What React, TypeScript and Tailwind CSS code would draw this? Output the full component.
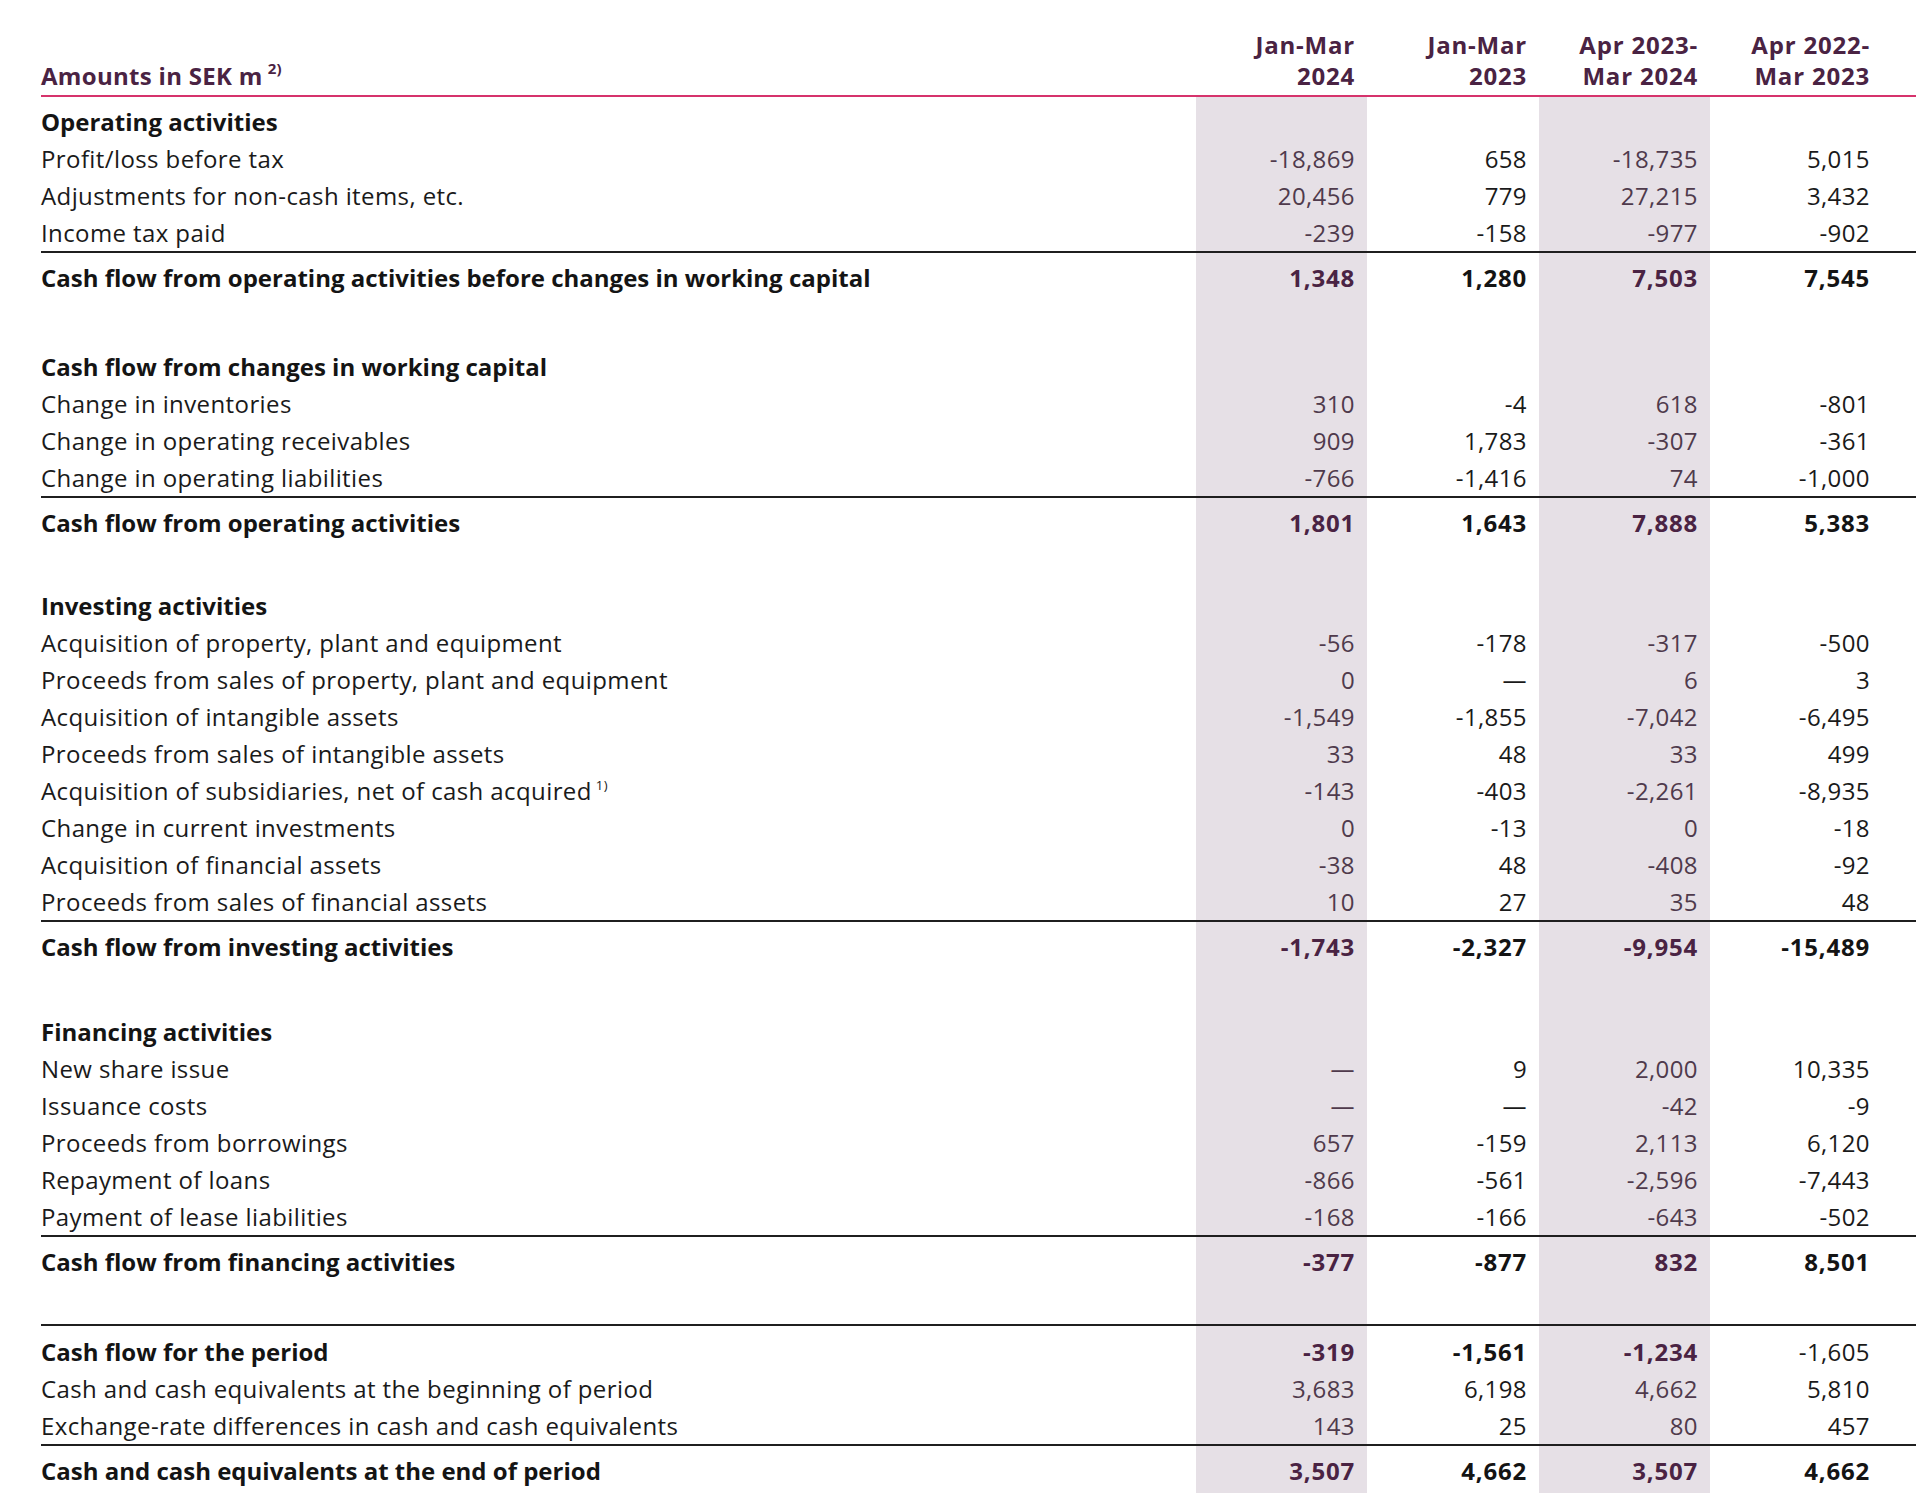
import React from "react";

type RowKind = "head" | "item" | "total" | "period";

type Row = {
  kind: RowKind;
  label: string;
  sup?: string;
  values?: string[];
  bold?: boolean[];
};

const GRID = "grid grid-cols-[1155px_171px_172px_171px_172px]";
const SHADE = "bg-[#e6e0e6]";

const sections: { rows: Row[]; after: string }[] = [
  {
    after: "h-[48px]",
    rows: [
      { kind: "head", label: "Operating activities" },
      { kind: "item", label: "Profit/loss before tax", values: ["-18,869", "658", "-18,735", "5,015"] },
      { kind: "item", label: "Adjustments for non-cash items, etc.", values: ["20,456", "779", "27,215", "3,432"] },
      { kind: "item", label: "Income tax paid", values: ["-239", "-158", "-977", "-902"] },
      {
        kind: "total",
        label: "Cash flow from operating activities before changes in working capital",
        values: ["1,348", "1,280", "7,503", "7,545"],
      },
    ],
  },
  {
    after: "h-[42px]",
    rows: [
      { kind: "head", label: "Cash flow from changes in working capital" },
      { kind: "item", label: "Change in inventories", values: ["310", "-4", "618", "-801"] },
      { kind: "item", label: "Change in operating receivables", values: ["909", "1,783", "-307", "-361"] },
      { kind: "item", label: "Change in operating liabilities", values: ["-766", "-1,416", "74", "-1,000"] },
      { kind: "total", label: "Cash flow from operating activities", values: ["1,801", "1,643", "7,888", "5,383"] },
    ],
  },
  {
    after: "h-[44px]",
    rows: [
      { kind: "head", label: "Investing activities" },
      { kind: "item", label: "Acquisition of property, plant and equipment", values: ["-56", "-178", "-317", "-500"] },
      { kind: "item", label: "Proceeds from sales of property, plant and equipment", values: ["0", "—", "6", "3"] },
      { kind: "item", label: "Acquisition of intangible assets", values: ["-1,549", "-1,855", "-7,042", "-6,495"] },
      { kind: "item", label: "Proceeds from sales of intangible assets", values: ["33", "48", "33", "499"] },
      {
        kind: "item",
        label: "Acquisition of subsidiaries, net of cash acquired",
        sup: "1)",
        values: ["-143", "-403", "-2,261", "-8,935"],
      },
      { kind: "item", label: "Change in current investments", values: ["0", "-13", "0", "-18"] },
      { kind: "item", label: "Acquisition of financial assets", values: ["-38", "48", "-408", "-92"] },
      { kind: "item", label: "Proceeds from sales of financial assets", values: ["10", "27", "35", "48"] },
      { kind: "total", label: "Cash flow from investing activities", values: ["-1,743", "-2,327", "-9,954", "-15,489"] },
    ],
  },
  {
    after: "h-[40px]",
    rows: [
      { kind: "head", label: "Financing activities" },
      { kind: "item", label: "New share issue", values: ["—", "9", "2,000", "10,335"] },
      { kind: "item", label: "Issuance costs", values: ["—", "—", "-42", "-9"] },
      { kind: "item", label: "Proceeds from borrowings", values: ["657", "-159", "2,113", "6,120"] },
      { kind: "item", label: "Repayment of loans", values: ["-866", "-561", "-2,596", "-7,443"] },
      { kind: "item", label: "Payment of lease liabilities", values: ["-168", "-166", "-643", "-502"] },
      { kind: "total", label: "Cash flow from financing activities", values: ["-377", "-877", "832", "8,501"] },
    ],
  },
];

const closing: Row[] = [
  {
    kind: "period",
    label: "Cash flow for the period",
    values: ["-319", "-1,561", "-1,234", "-1,605"],
    bold: [true, true, true, false],
  },
  { kind: "item", label: "Cash and cash equivalents at the beginning of period", values: ["3,683", "6,198", "4,662", "5,810"] },
  { kind: "item", label: "Exchange-rate differences in cash and cash equivalents", values: ["143", "25", "80", "457"] },
  { kind: "total", label: "Cash and cash equivalents at the end of period", values: ["3,507", "4,662", "3,507", "4,662"] },
];

// empty band that keeps the shaded columns running
const Gap = ({ className }: { className: string }) => (
  <div className={`${GRID} ${className}`}>
    <div />
    <div className={SHADE} />
    <div />
    <div className={SHADE} />
    <div />
  </div>
);

const valueColor = (col: number, bold: boolean) => {
  const shaded = col === 0 || col === 2;
  if (shaded) return bold ? "text-[#4a2343] font-bold tracking-[0.8px]" : "text-[#4f3a4c] tracking-[0.4px]";
  return bold ? "text-[#141414] font-bold tracking-[0.8px]" : "text-[#1a1a1a] tracking-[0.4px]";
};

const TableRow = ({ row }: { row: Row }) => {
  const isTotal = row.kind === "total";
  const labelBold = row.kind !== "item";
  const height = isTotal ? "h-[47px] pt-[2px]" : "h-[37px]";

  return (
    <div className={`${GRID} ${isTotal ? "border-t-2 border-[#1f1f1f]" : ""}`}>
      <div
        className={`${height} flex items-center ${
          labelBold ? "font-bold text-[#141414]" : "text-[#1a1a1a] tracking-[0.4px]"
        }`}
      >
        <span>
          {row.label}
          {row.sup && <sup className="ml-[4px] text-[13px] top-[-0.75em]">{row.sup}</sup>}
        </span>
      </div>
      {[0, 1, 2, 3].map((i) => {
        const v = row.values ? row.values[i] : "";
        const bold = row.bold ? row.bold[i] : isTotal || row.kind === "period";
        return (
          <div
            key={i}
            className={`${height} flex items-center justify-end pr-[12px] ${
              i === 0 || i === 2 ? SHADE : ""
            } ${valueColor(i, bold)}`}
          >
            {v}
          </div>
        );
      })}
    </div>
  );
};

const headers = [
  ["Jan-Mar", "2024"],
  ["Jan-Mar", "2023"],
  ["Apr 2023-", "Mar 2024"],
  ["Apr 2022-", "Mar 2023"],
];

export default function App() {
  return (
    <div className="min-h-screen bg-white font-['Open_Sans',sans-serif] text-[24px]">
      <div className="pl-[41px] pt-[29px]">
        <div
          className={`${GRID} items-end pb-[4px] border-b-2 border-[#d6336c] font-bold text-[#4a2343] leading-[31px]`}
        >
          <div className="tracking-[0.3px]">
            Amounts in SEK m
            <sup className="ml-[5px] text-[15px] top-[-0.75em]">2)</sup>
          </div>
          {headers.map(([a, b]) => (
            <div key={a + b} className="text-right pr-[12px] tracking-[0.8px]">
              <div>{a}</div>
              <div>{b}</div>
            </div>
          ))}
        </div>

        <Gap className="h-[6px]" />
        {sections.map((s, si) => (
          <React.Fragment key={si}>
            {s.rows.map((row) => (
              <TableRow key={row.label} row={row} />
            ))}
            <Gap className={s.after} />
          </React.Fragment>
        ))}
        <div className="border-t-2 border-[#1f1f1f]">
          <Gap className="h-[7px]" />
          {closing.map((row) => (
            <TableRow key={row.label} row={row} />
          ))}
        </div>
      </div>
    </div>
  );
}
